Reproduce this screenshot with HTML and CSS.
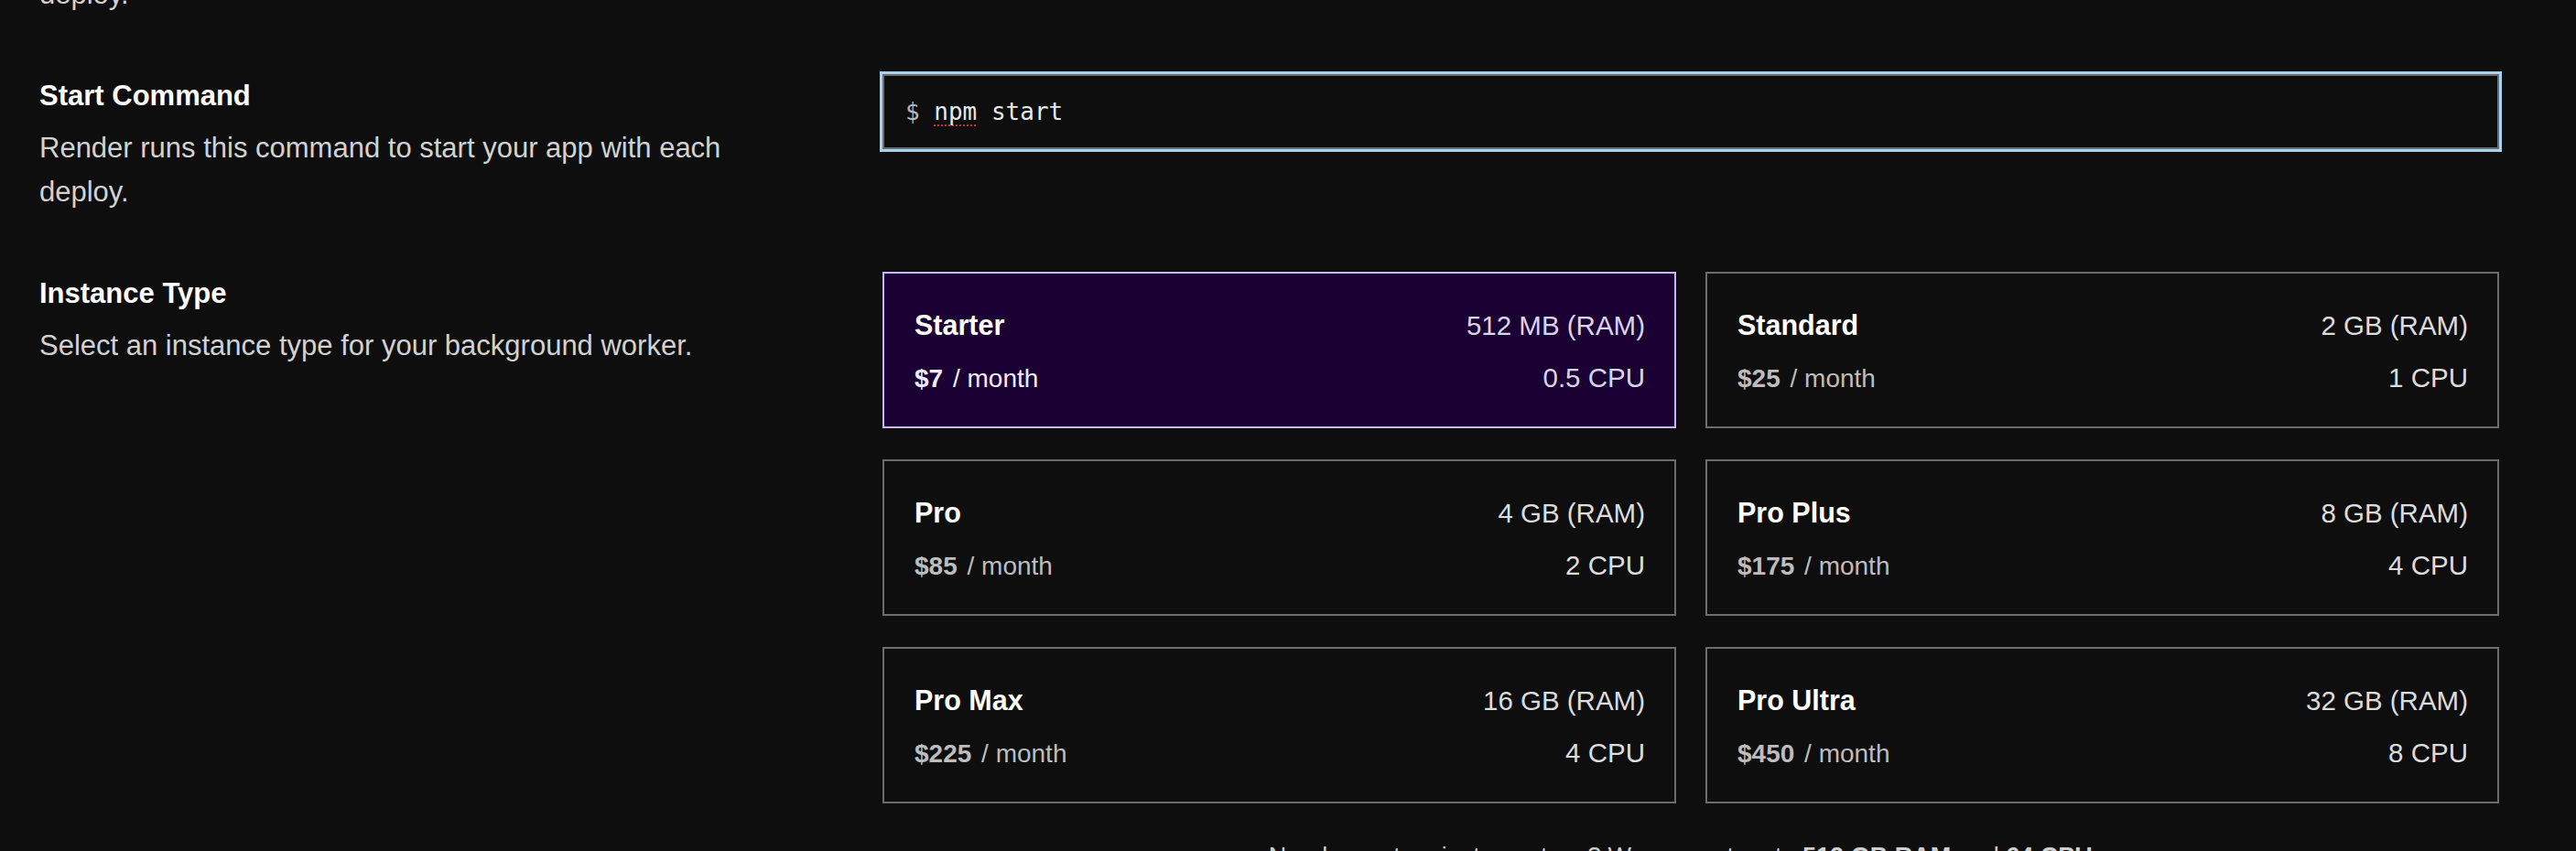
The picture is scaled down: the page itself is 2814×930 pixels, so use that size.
FILE: index.html
```html
<!DOCTYPE html>
<html lang="en">
<head>
<meta charset="utf-8">
<title>New Background Worker</title>
<link rel="stylesheet" href="styles.css">
</head>
<body>
<main class="page">
  <section class="row row-prev">
    <div class="label">
      <p class="desc">deploy.</p>
    </div>
    <div class="control"></div>
  </section>

  <section class="row">
    <div class="label">
      <h3 class="title">Start Command</h3>
      <p class="desc">Render runs this command to start your app with each deploy.</p>
    </div>
    <div class="control">
      <div class="cmd-input"><span class="prompt">$</span> <span class="typo">npm</span> start</div>
    </div>
  </section>

  <section class="row">
    <div class="label">
      <h3 class="title">Instance Type</h3>
      <p class="desc">Select an instance type for your background worker.</p>
    </div>
    <div class="control">
      <div class="plans">
        <div class="plan selected">
          <span class="name">Starter</span><span class="spec">512 MB (RAM)</span>
          <span class="price"><b>$7</b> / month</span><span class="spec">0.5 CPU</span>
        </div>
        <div class="plan">
          <span class="name">Standard</span><span class="spec">2 GB (RAM)</span>
          <span class="price"><b>$25</b> / month</span><span class="spec">1 CPU</span>
        </div>
        <div class="plan">
          <span class="name">Pro</span><span class="spec">4 GB (RAM)</span>
          <span class="price"><b>$85</b> / month</span><span class="spec">2 CPU</span>
        </div>
        <div class="plan">
          <span class="name">Pro Plus</span><span class="spec">8 GB (RAM)</span>
          <span class="price"><b>$175</b> / month</span><span class="spec">4 CPU</span>
        </div>
        <div class="plan">
          <span class="name">Pro Max</span><span class="spec">16 GB (RAM)</span>
          <span class="price"><b>$225</b> / month</span><span class="spec">4 CPU</span>
        </div>
        <div class="plan">
          <span class="name">Pro Ultra</span><span class="spec">32 GB (RAM)</span>
          <span class="price"><b>$450</b> / month</span><span class="spec">8 CPU</span>
        </div>
      </div>
      <p class="note">Need a custom instance type? We support up to <b>512 GB RAM</b> and <b>64 CPUs</b>.</p>
    </div>
  </section>
</main>
</body>
</html>
```

FILE: styles.css
```css
html, body {
  margin: 0;
  padding: 0;
  background: #0e0e0e;
  overflow: hidden;
}

body {
  font-family: "Liberation Sans", Arial, sans-serif;
  color: #d6d6d6;
}

.page {
  margin-top: -30px;
  padding-left: 43px;
  display: flex;
  flex-direction: column;
  gap: 63px;
}

.row {
  display: grid;
  grid-template-columns: 810px 1766px;
  column-gap: 111px;
  align-items: start;
}

.title {
  margin: 0;
  font-size: 31px;
  line-height: 48px;
  font-weight: 700;
  color: #ffffff;
}

.desc {
  margin: 9px 0 0;
  font-size: 31px;
  line-height: 48px;
  color: #d2d2d2;
}

.row-prev .desc {
  margin: 0;
}

.cmd-input {
  box-sizing: border-box;
  height: 82px;
  border: 2px solid #6c6c6c;
  outline: 3px solid #a8d0ef;
  padding: 0 23px;
  font-family: "DejaVu Sans Mono", "Liberation Mono", monospace;
  font-size: 26px;
  line-height: 78px;
  color: #e8e8e8;
  white-space: pre;
}

.cmd-input .prompt {
  color: #b8b8b8;
}

.typo {
  text-decoration: underline dotted #c0392b;
  text-decoration-thickness: 2px;
  text-underline-offset: 5px;
}

.plans {
  display: grid;
  grid-template-columns: 1fr 1fr;
  gap: 34px 32px;
}

.plan {
  box-sizing: border-box;
  height: 171px;
  border: 2px solid #6c6c6c;
  padding: 38px 32px 0 33px;
  display: grid;
  grid-template-columns: 1fr auto;
  grid-template-rows: 36px 32px;
  row-gap: 22px;
  align-items: baseline;
  background: #0e0e0e;
}

.plan.selected {
  background: #1a0033;
  border-color: #c8b6ef;
}

.name {
  font-size: 30.5px;
  line-height: 36px;
  font-weight: 700;
  color: #ffffff;
}

.spec {
  font-size: 29.5px;
  line-height: 36px;
  color: #dcdcdc;
  text-align: right;
}

.price {
  font-size: 28px;
  line-height: 32px;
  color: #bdbdbd;
}

.price b {
  margin-right: 3px;
}

.selected .price {
  color: #f1ecfb;
}

.selected .spec {
  color: #dcd3ea;
}

.note {
  margin: 38px 0 0;
  text-align: center;
  font-size: 27px;
  line-height: 40px;
  color: #d0d0d0;
}
```
